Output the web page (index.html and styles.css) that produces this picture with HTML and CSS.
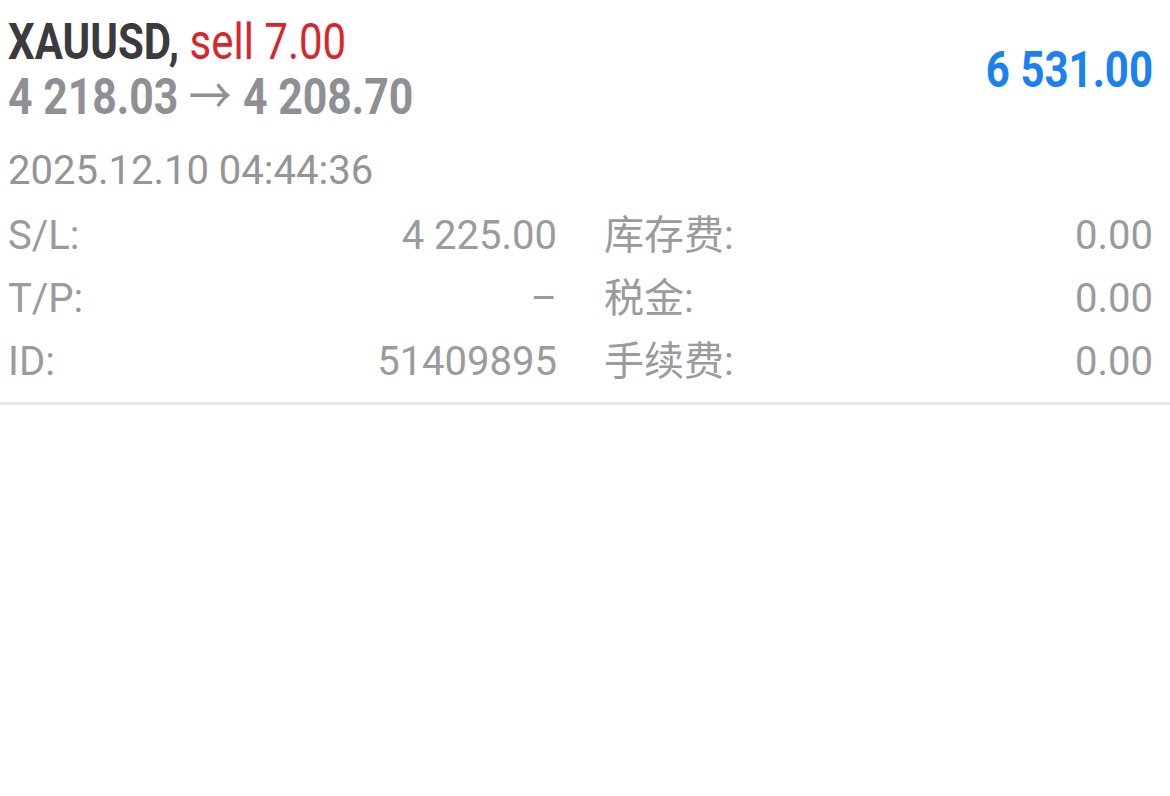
FILE: index.html
```html
<!DOCTYPE html>
<html lang="zh-CN">
<head>
<meta charset="utf-8">
<title>XAUUSD</title>
<link rel="stylesheet" href="styles.css">
</head>
<body>
<div class="deal">
  <div class="head">
    <div class="head-left">
      <div class="title"><span class="cond"><span class="sym">XAUUSD,</span> <span class="side">sell 7.00</span></span></div>
      <div class="prices"><span class="cond cond-wide">4 218.03 <span class="arrow">→</span> 4 208.70</span></div>
    </div>
    <div class="profit"><span class="cond cond-r">6 531.00</span></div>
  </div>
  <div class="time">2025.12.10 04:44:36</div>
  <div class="grid">
    <div class="cell"><span class="lbl">S/L:</span><span class="val">4 225.00</span></div>
    <div class="cell"><span class="lbl">库存费:</span><span class="val">0.00</span></div>
    <div class="cell"><span class="lbl">T/P:</span><span class="val">–</span></div>
    <div class="cell"><span class="lbl">税金:</span><span class="val">0.00</span></div>
    <div class="cell"><span class="lbl">ID:</span><span class="val">51409895</span></div>
    <div class="cell"><span class="lbl">手续费:</span><span class="val">0.00</span></div>
  </div>
</div>
</body>
</html>
```
FILE: styles.css
```css
html, body {
  margin: 0;
  padding: 0;
  background: #ffffff;
}
body {
  font-family: Roboto, "Noto Sans CJK SC", sans-serif;
}
.deal {
  padding: 15px 17px 9px 8px;
  border-bottom: 3px solid #e6e6e6;
}
.head {
  display: flex;
  align-items: center;
  justify-content: space-between;
}
.title, .prices {
  font-size: 50px;
  line-height: 55px;
  font-weight: 700;
  white-space: nowrap;
}
.cond {
  display: inline-block;
  transform: scaleX(0.84);
  transform-origin: left center;
}
.cond-wide {
  transform: scaleX(0.855);
}
.cond-r {
  transform-origin: right center;
}
.sym { color: #3b3b3f; }
.side { color: #d9262c; font-weight: 400; }
.prices { color: #8e9094; }
.arrow { font-weight: 400; letter-spacing: 1px; }
.profit {
  font-size: 50px;
  line-height: 55px;
  font-weight: 700;
  color: #1a82f0;
  white-space: nowrap;
}
.time {
  margin-top: 13px;
  font-size: 40px;
  line-height: 66px;
  color: #939599;
}
.grid {
  display: grid;
  grid-template-columns: 1fr 1fr;
  column-gap: 47px;
}
.cell {
  display: flex;
  justify-content: space-between;
  font-size: 40px;
  line-height: 63px;
  color: #999b9e;
}
.lbl, .val { white-space: nowrap; }
```
